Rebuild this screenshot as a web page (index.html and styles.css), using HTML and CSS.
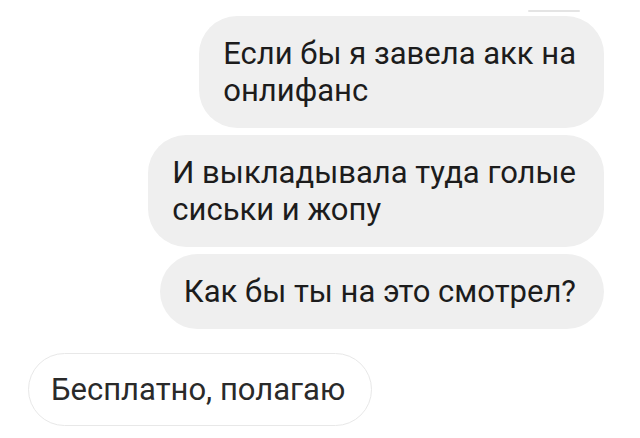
FILE: index.html
```html
<!DOCTYPE html>
<html lang="ru">
<head>
  <meta charset="UTF-8" />
  <title>Чат</title>
  <link rel="stylesheet" href="styles.css">
</head>
<body>

  <div class="chat">
    <div class="prev-edge"></div>

    <div class="msg out">Если бы я завела акк на<br>онлифанс</div>
    <div class="msg out">И выкладывала туда голые<br>сиськи и жопу</div>
    <div class="msg out">Как бы ты на это смотрел?</div>

    <div class="msg in">Бесплатно, полагаю</div>
  </div>

</body>
</html>
```

FILE: styles.css
```css
body {
  margin: 0;
  padding: 0;
  background: #fff;
  font-family: Roboto, "Noto Sans", Arial, sans-serif;
  color: #1c1c1c;
}

.chat {
  display: flex;
  flex-direction: column;
  padding: 10px 36px 0 28px;
}

/* bottom edge of the bubble above, cut off by the screenshot */
.prev-edge {
  align-self: flex-end;
  width: 52px;
  height: 2px;
  margin-right: 24px;
  margin-bottom: 4px;
  background: #e4e4e4;
  border-radius: 2px;
}

.msg {
  width: fit-content;
  font-size: 31px;
  line-height: 37px;
  padding: 19px 28px 19px 24px;
  border-radius: 38px;
  white-space: nowrap;
}

.msg.out {
  align-self: flex-end;
  background: #efefef;
  margin-bottom: 7px;
}

.msg.in {
  align-self: flex-start;
  background: #fff;
  border: 1.5px solid #e8e8e8;
  padding: 17px 26px 17px 22px;
  margin-top: 17px;
  color: #2a2a2a;
}
```
